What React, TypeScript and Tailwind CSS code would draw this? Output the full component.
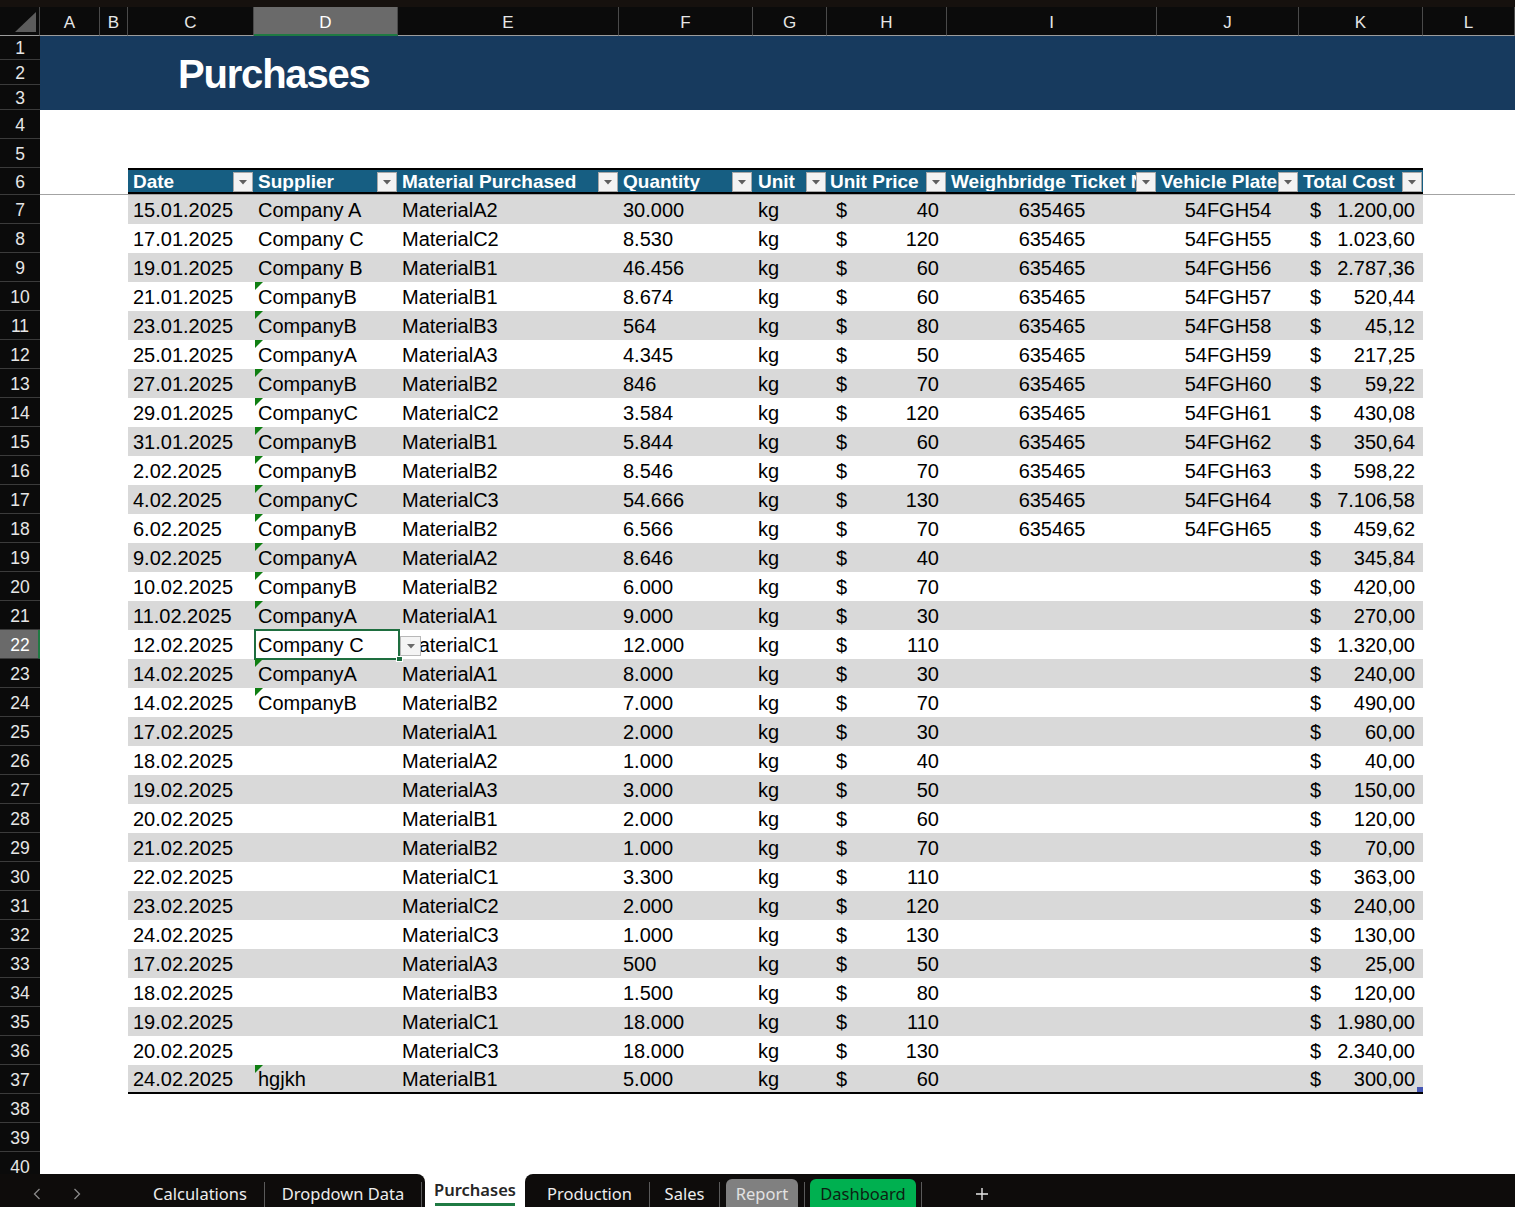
import React from "react";

type Row = [number, string, string, boolean, string, string, string, string, string, string];

const data: Row[] = [
  [7, "15.01.2025", "Company A", false, "MaterialA2", "30.000", "40", "635465", "54FGH54", "1.200,00"],
  [8, "17.01.2025", "Company C", false, "MaterialC2", "8.530", "120", "635465", "54FGH55", "1.023,60"],
  [9, "19.01.2025", "Company B", false, "MaterialB1", "46.456", "60", "635465", "54FGH56", "2.787,36"],
  [10, "21.01.2025", "CompanyB", true, "MaterialB1", "8.674", "60", "635465", "54FGH57", "520,44"],
  [11, "23.01.2025", "CompanyB", true, "MaterialB3", "564", "80", "635465", "54FGH58", "45,12"],
  [12, "25.01.2025", "CompanyA", true, "MaterialA3", "4.345", "50", "635465", "54FGH59", "217,25"],
  [13, "27.01.2025", "CompanyB", true, "MaterialB2", "846", "70", "635465", "54FGH60", "59,22"],
  [14, "29.01.2025", "CompanyC", true, "MaterialC2", "3.584", "120", "635465", "54FGH61", "430,08"],
  [15, "31.01.2025", "CompanyB", true, "MaterialB1", "5.844", "60", "635465", "54FGH62", "350,64"],
  [16, "2.02.2025", "CompanyB", true, "MaterialB2", "8.546", "70", "635465", "54FGH63", "598,22"],
  [17, "4.02.2025", "CompanyC", true, "MaterialC3", "54.666", "130", "635465", "54FGH64", "7.106,58"],
  [18, "6.02.2025", "CompanyB", true, "MaterialB2", "6.566", "70", "635465", "54FGH65", "459,62"],
  [19, "9.02.2025", "CompanyA", true, "MaterialA2", "8.646", "40", "", "", "345,84"],
  [20, "10.02.2025", "CompanyB", true, "MaterialB2", "6.000", "70", "", "", "420,00"],
  [21, "11.02.2025", "CompanyA", true, "MaterialA1", "9.000", "30", "", "", "270,00"],
  [22, "12.02.2025", "Company C", false, "MaterialC1", "12.000", "110", "", "", "1.320,00"],
  [23, "14.02.2025", "CompanyA", true, "MaterialA1", "8.000", "30", "", "", "240,00"],
  [24, "14.02.2025", "CompanyB", true, "MaterialB2", "7.000", "70", "", "", "490,00"],
  [25, "17.02.2025", "", false, "MaterialA1", "2.000", "30", "", "", "60,00"],
  [26, "18.02.2025", "", false, "MaterialA2", "1.000", "40", "", "", "40,00"],
  [27, "19.02.2025", "", false, "MaterialA3", "3.000", "50", "", "", "150,00"],
  [28, "20.02.2025", "", false, "MaterialB1", "2.000", "60", "", "", "120,00"],
  [29, "21.02.2025", "", false, "MaterialB2", "1.000", "70", "", "", "70,00"],
  [30, "22.02.2025", "", false, "MaterialC1", "3.300", "110", "", "", "363,00"],
  [31, "23.02.2025", "", false, "MaterialC2", "2.000", "120", "", "", "240,00"],
  [32, "24.02.2025", "", false, "MaterialC3", "1.000", "130", "", "", "130,00"],
  [33, "17.02.2025", "", false, "MaterialA3", "500", "50", "", "", "25,00"],
  [34, "18.02.2025", "", false, "MaterialB3", "1.500", "80", "", "", "120,00"],
  [35, "19.02.2025", "", false, "MaterialC1", "18.000", "110", "", "", "1.980,00"],
  [36, "20.02.2025", "", false, "MaterialC3", "18.000", "130", "", "", "2.340,00"],
  [37, "24.02.2025", "hgjkh", true, "MaterialB1", "5.000", "60", "", "", "300,00"],
];

const colLetters: [string, string][] = [
  ["A", "w-[60px]"],
  ["B", "w-[28px]"],
  ["C", "w-[126px]"],
  ["D", "w-[144px]"],
  ["E", "w-[221px]"],
  ["F", "w-[134px]"],
  ["G", "w-[74px]"],
  ["H", "w-[120px]"],
  ["I", "w-[210px]"],
  ["J", "w-[142px]"],
  ["K", "w-[124px]"],
  ["L", "w-[92px]"],
];

const headers: [string, string, string][] = [
  ["Date", "w-[126px]", "pl-[5px]"],
  ["Supplier", "w-[144px]", "pl-[4px]"],
  ["Material Purchased", "w-[221px]", "pl-[4px]"],
  ["Quantity", "w-[134px]", "pl-[4px]"],
  ["Unit", "w-[74px]", "pl-[5px]"],
  ["Unit Price", "w-[120px]", "pl-[3px]"],
  ["Weighbridge Ticket Number", "w-[210px]", "pl-[4px]"],
  ["Vehicle Plate", "w-[142px]", "pl-[4px]"],
  ["Total Cost", "w-[124px]", "pl-[4px]"],
];

function Tri({ color }: { color: string }) {
  return (
    <svg width="8" height="5" viewBox="0 0 8 5">
      <path d="M0 0H8L4 4.5Z" fill={color} />
    </svg>
  );
}

function RowNum({ n, h, sel }: { n: number; h: string; sel?: boolean }) {
  return (
    <div
      className={`${h} w-[40px] shrink-0 flex items-center justify-center border-b border-[#3b3b3b] text-[17.5px] leading-none pt-[3px] ${
        sel ? "bg-[#6a6a6a] text-white border-r-2 border-r-[#1f7a43] pl-[2px]" : "bg-[#0b0b0b] text-[#e6e6e6]"
      }`}
    >
      {n}
    </div>
  );
}

function DataRow({ r }: { r: Row }) {
  const [n, date, sup, tri, mat, qty, price, ticket, plate, total] = r;
  const bg = n % 2 === 1 ? "bg-[#d9d9d9]" : "bg-white";
  const last = n === 37;
  return (
    <div className="flex h-[29px] shrink-0">
      <RowNum n={n} h="h-[29px]" sel={n === 22} />
      <div className="w-[88px] shrink-0" />
      <div
        className={`flex w-[1295px] shrink-0 text-[20px] leading-none text-black ${bg} ${
          last ? "border-b-2 border-black" : ""
        }`}
      >
        <div className="w-[126px] shrink-0 pl-[5px] flex items-center">{date}</div>
        <div className="w-[144px] shrink-0 pl-[4px] flex items-center relative whitespace-nowrap">
          {tri && (
            <svg className="absolute left-[1px] top-0" width="8" height="8" viewBox="0 0 8 8">
              <path d="M0 0H8L0 8Z" fill="#0f7f12" />
            </svg>
          )}
          {sup}
          {n === 22 && (
            <>
              <div className="absolute left-0 top-[-1px] w-[146px] h-[31px] border-2 border-[#1e6e3f]" />
              <div className="absolute left-[142px] top-[26px] w-[7px] h-[6px] bg-[#1e6e3f] border border-white" />
              <div className="absolute left-[146px] top-[6px] w-[21px] h-[20px] bg-[#f4f4f4] border border-[#b8b8b8] flex items-center justify-center z-10">
                <Tri color="#6a6a6a" />
              </div>
            </>
          )}
        </div>
        <div className="w-[221px] shrink-0 pl-[4px] flex items-center">{mat}</div>
        <div className="w-[134px] shrink-0 pl-[4px] flex items-center">{qty}</div>
        <div className="w-[74px] shrink-0 pl-[5px] flex items-center">kg</div>
        <div className="w-[120px] shrink-0 pl-[9px] pr-[8px] flex items-center justify-between">
          <span>$</span>
          <span>{price}</span>
        </div>
        <div className="w-[210px] shrink-0 flex items-center justify-center">{ticket}</div>
        <div className="w-[142px] shrink-0 flex items-center justify-center">{plate}</div>
        <div className="w-[124px] shrink-0 pl-[11px] pr-[8px] flex items-center justify-between relative">
          <span>$</span>
          <span>{total}</span>
          {last && <div className="absolute right-0 bottom-0 w-[6px] h-[5px] bg-[#4657b5]" />}
        </div>
      </div>
    </div>
  );
}

function EmptyRow({ n }: { n: number }) {
  return (
    <div className="flex h-[29px] shrink-0">
      <RowNum n={n} h="h-[29px]" />
      <div className="flex-1" />
    </div>
  );
}

function Sep() {
  return <div className="w-px shrink-0 bg-[#5a5a5a] mt-[8px]" />;
}

export default function App() {
  return (
    <div className="w-[1515px] h-[1207px] overflow-hidden flex flex-col bg-white font-['Liberation_Sans',Arial,sans-serif]">
      <div className="h-[1174px] shrink-0 overflow-hidden flex flex-col">
        {/* top strip */}
        <div className="h-[7px] shrink-0 bg-[#16110e]" />
        {/* column letters */}
        <div className="flex h-[29px] shrink-0 bg-[#0b0b0b]">
          <div className="w-[40px] shrink-0 border-r border-b border-r-[#4a4a4a] border-b-[#9c9c9c] flex items-end justify-end pr-[3px] pb-[3px]">
            <svg width="21" height="20" viewBox="0 0 21 20">
              <path d="M21 0V20H0Z" fill="#5c5c5c" />
            </svg>
          </div>
          {colLetters.map(([l, w]) => (
            <div
              key={l}
              className={`${w} shrink-0 flex items-center justify-center text-[17px] leading-none border-r border-r-[#4a4a4a] ${
                l === "D"
                  ? "bg-[#6a6a6a] text-white border-b-2 border-b-[#1f7a43] pt-[3px]"
                  : "text-[#e6e6e6] border-b border-b-[#9c9c9c] pt-[2px]"
              }`}
            >
              {l}
            </div>
          ))}
        </div>
        {/* rows 1-3 title band */}
        <div className="flex shrink-0">
          <div className="flex flex-col">
            <RowNum n={1} h="h-[24px]" />
            <RowNum n={2} h="h-[25px]" />
            <RowNum n={3} h="h-[25px]" />
          </div>
          <div className="flex-1 bg-[#173a5e] flex items-center pl-[138px]">
            <span className="text-white font-bold text-[40px] tracking-[-1.2px] leading-none pt-[2px]">Purchases</span>
          </div>
        </div>
        <EmptyRow n={4} />
        <EmptyRow n={5} />
        {/* row 6 table header */}
        <div className="flex h-[27px] shrink-0">
          <RowNum n={6} h="h-[27px]" />
          <div className="flex flex-1 border-b border-[#a3a3a3]">
            <div className="w-[88px] shrink-0" />
            <div className="flex w-[1295px] shrink-0 bg-[#165e82] border-t-2 border-b-2 border-black text-white font-bold text-[19px] leading-none">
              {headers.map(([label, w, pl]) => (
                <div key={label} className={`${w} shrink-0 flex items-end`}>
                  <div className={`flex-1 min-w-0 overflow-hidden whitespace-nowrap self-center ${pl}`}>{label}</div>
                  <div className="w-[20px] h-[20px] mr-[1px] shrink-0 bg-[#f3f3f3] border border-[#a8a8a8] flex items-center justify-center">
                    <Tri color="#5f5f5f" />
                  </div>
                </div>
              ))}
            </div>
          </div>
        </div>
        {data.map((r) => (
          <DataRow key={r[0]} r={r} />
        ))}
        <EmptyRow n={38} />
        <EmptyRow n={39} />
        <EmptyRow n={40} />
      </div>

      {/* sheet tabs */}
      <div className="flex h-[33px] shrink-0 bg-white font-['Noto_Sans',sans-serif] text-[16.5px] leading-none">
        <div className="w-[425px] shrink-0 bg-[#0e0c0b] rounded-tr-[8px] flex items-stretch text-[#ededed]">
          <div className="w-[136px] shrink-0 flex items-center pt-[7px]">
            <svg className="ml-[33px]" width="8" height="12" viewBox="0 0 8 12">
              <path d="M6.5 1L1.5 6L6.5 11" stroke="#8a8a8a" strokeWidth="1.3" fill="none" />
            </svg>
            <svg className="ml-[32px]" width="8" height="12" viewBox="0 0 8 12">
              <path d="M1.5 1L6.5 6L1.5 11" stroke="#8a8a8a" strokeWidth="1.3" fill="none" />
            </svg>
          </div>
          <div className="w-[128px] shrink-0 flex items-center justify-center pt-[8px]">Calculations</div>
          <Sep />
          <div className="w-[156px] shrink-0 flex items-center justify-center pt-[8px]">Dropdown Data</div>
          <Sep />
        </div>
        <div className="w-[100px] shrink-0 flex flex-col items-center pt-[6px]">
          <div className="h-[20px] flex items-center font-semibold text-[#262626]">Purchases</div>
          <div className="w-[80px] h-[3px] mt-[3px] bg-[#1f7a43]" />
        </div>
        <div className="flex-1 bg-[#0e0c0b] rounded-tl-[8px] flex items-stretch text-[#ededed]">
          <div className="ml-[5px] w-[119px] shrink-0 flex items-center justify-center pt-[8px]">Production</div>
          <Sep />
          <div className="w-[69px] shrink-0 flex items-center justify-center pt-[8px]">Sales</div>
          <Sep />
          <div className="ml-[6px] w-[72px] shrink-0 mt-[5px] rounded-t-[6px] bg-[#808080] flex items-center justify-center pt-[3px] text-[#e2e2e2]">
            Report
          </div>
          <div className="ml-[6px] flex">
            <Sep />
          </div>
          <div className="ml-[5px] w-[106px] shrink-0 mt-[5px] rounded-t-[6px] bg-[#00b050] flex items-center justify-center pt-[3px] text-[#0d1f12]">
            Dashboard
          </div>
          <div className="ml-[5px] flex">
            <Sep />
          </div>
          <div className="ml-[52px] w-[16px] flex items-center justify-center pt-[6px]">
            <svg width="14" height="14" viewBox="0 0 14 14">
              <path d="M7 1V13M1 7H13" stroke="#e6e6e6" strokeWidth="1.4" />
            </svg>
          </div>
        </div>
      </div>
    </div>
  );
}
